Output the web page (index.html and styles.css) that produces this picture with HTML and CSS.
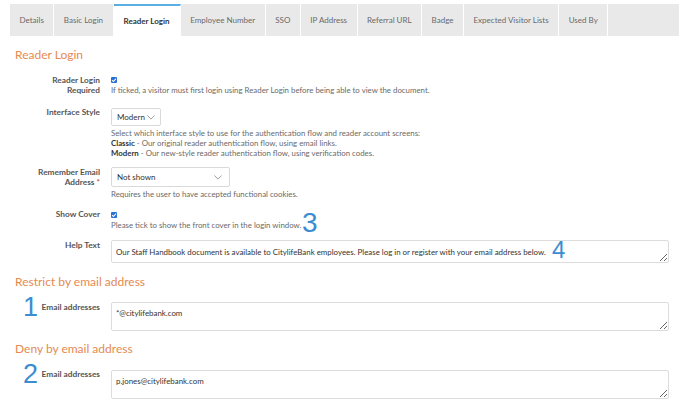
FILE: index.html
```html
<!DOCTYPE html>
<html>
<head>
<meta charset="utf-8">
<link rel="stylesheet" href="styles.css">
</head>
<body>
<div class="tabs">
  <div class="tab">Details</div>
  <div class="tab">Basic Login</div>
  <div class="tab active">Reader Login</div>
  <div class="tab">Employee Number</div>
  <div class="tab">SSO</div>
  <div class="tab">IP Address</div>
  <div class="tab">Referral URL</div>
  <div class="tab">Badge</div>
  <div class="tab">Expected Visitor Lists</div>
  <div class="tab">Used By</div>
  <div class="tab-fill"></div>
</div>

<h2 class="heading h-first">Reader Login</h2>

<div class="row r1">
  <div class="label">Reader Login<br>Required</div>
  <div class="field">
    <div class="check-line"><span class="check"><svg viewBox="0 0 8 8" width="6" height="6"><path d="M1.5 4.2 L3.3 6 L6.6 2.2" fill="none" stroke="#fff" stroke-width="1.4"/></svg></span></div>
    <div class="desc">If ticked, a visitor must first login using Reader Login before being able to view the document.</div>
  </div>
</div>

<div class="row r2">
  <div class="label">Interface Style</div>
  <div class="field">
    <div class="select sel-modern"><span>Modern</span><svg class="chev" viewBox="0 0 10 6" width="8" height="5"><path d="M0.5 0.5 L5 5 L9.5 0.5" fill="none" stroke="#777" stroke-width="0.9"/></svg></div>
    <div class="desc">Select which interface style to use for the authentication flow and reader account screens:<br><b>Classic</b> - Our original reader authentication flow, using email links.<br><b>Modern</b> - Our new-style reader authentication flow, using verification codes.</div>
  </div>
</div>

<div class="row r3">
  <div class="label">Remember Email<br>Address <span class="req">*</span></div>
  <div class="field">
    <div class="select sel-wide"><span>Not shown</span><svg class="chev" viewBox="0 0 10 6" width="8" height="5"><path d="M0.5 0.5 L5 5 L9.5 0.5" fill="none" stroke="#777" stroke-width="0.9"/></svg></div>
    <div class="desc">Requires the user to have accepted functional cookies.</div>
  </div>
</div>

<div class="row r4">
  <div class="label">Show Cover</div>
  <div class="field">
    <div class="check-line cl2"><span class="check"><svg viewBox="0 0 8 8" width="6" height="6"><path d="M1.5 4.2 L3.3 6 L6.6 2.2" fill="none" stroke="#fff" stroke-width="1.4"/></svg></span></div>
    <div class="desc">Please tick to show the front cover in the login window.</div>
  </div>
  <span class="num n3">3</span>
</div>

<div class="row r5">
  <div class="label">Help Text</div>
  <div class="field">
    <textarea class="ta ta-help">Our Staff Handbook document is available to CitylifeBank employees. Please log in or register with your email address below.</textarea>
  </div>
  <span class="num n4">4</span>
</div>

<h2 class="heading h2">Restrict by email address</h2>

<div class="row r6">
  <span class="num n1">1</span>
  <div class="label">Email addresses</div>
  <div class="field">
    <textarea class="ta ta-email">*@citylifebank.com</textarea>
  </div>
</div>

<h2 class="heading h3">Deny by email address</h2>

<div class="row r7">
  <span class="num n1">2</span>
  <div class="label">Email addresses</div>
  <div class="field">
    <textarea class="ta ta-email">p.jones@citylifebank.com</textarea>
  </div>
</div>
</body>
</html>
```

FILE: styles.css
```css
* { box-sizing: border-box; }
html, body { margin: 0; padding: 0; background: #fff; }
body {
  font-family: Lato, "Open Sans", "Liberation Sans", sans-serif;
  color: #444;
  width: 688px;
  height: 410px;
  overflow: hidden;
}

.tabs {
  display: flex;
  margin: 4px 9px 0 10px;
  height: 32px;
  background: #e9e9e9;
}
.tab {
  display: flex;
  align-items: center;
  padding: 0 9.5px;
  font-size: 8px;
  color: #6a6a6a;
  border-right: 1px solid #fff;
  white-space: nowrap;
}
.tab.active {
  background: #fff;
  color: #333;
  font-weight: 700;
  border-top: 2px solid #5aaee3;
  padding: 0 10px;
}
.tab-fill { flex: 1; }

.heading {
  font-weight: 400;
  color: #e58a52;
  font-size: 12px;
  line-height: 14px;
  margin: 0 0 0 15px;
}
.h-first { margin-top: 12px; }
.h2 { margin-top: 12px; }
.h3 { margin-top: 11px; }

.row {
  position: relative;
  display: grid;
  grid-template-columns: 100px 558px;
  column-gap: 11px;
}
.label {
  text-align: right;
  font-size: 8.3px;
  line-height: 10px;
  font-weight: 700;
  color: #555;
}
.req { color: #c0392b; font-weight: 400; }
.field { position: relative; }
.desc {
  font-size: 7.85px;
  line-height: 10px;
  color: #6a6a6a;
}
.desc b { color: #333; font-weight: 700; }

.r1 { margin-top: 13px; }
.r2 { margin-top: 12px; }
.r3 { margin-top: 9px; }
.r4 { margin-top: 10px; }
.r5 { margin-top: 10px; }
.r6 { margin-top: 13px; }
.r7 { margin-top: 13px; }

.check-line { height: 10px; display: flex; align-items: center; }
.cl2 { height: 11px; }
.check {
  width: 6px;
  height: 6px;
  border-radius: 1px;
  background: #2b6fd6;
  display: flex;
  align-items: center;
  justify-content: center;
}

.select {
  display: flex;
  align-items: center;
  justify-content: space-between;
  border: 1px solid #d9d9d9;
  border-radius: 2px;
  background: #fff;
  padding: 0 5px 0 5px;
  font-size: 8px;
  color: #333;
}
.sel-modern { width: 50px; height: 18px; margin-top: 1px; margin-bottom: 2px; }
.sel-wide { width: 119px; height: 20px; margin-bottom: 2px; padding-right: 7px; }
.chev { display: block; }

.ta {
  display: block;
  width: 558px;
  border: 1px solid #dcdcdc;
  border-radius: 2px;
  font-family: Lato, "Open Sans", "Liberation Sans", sans-serif;
  font-size: 7.9px;
  color: #333;
  padding: 6px 4px;
  margin: 0;
  line-height: 10px;
  resize: vertical;
  overflow: hidden;
  background: #fff;
}
.ta-help { height: 23px; }
.ta-email { height: 29px; padding-top: 5px; }
.r7 .ta-email { margin-top: 1px; }

.num {
  position: absolute;
  font-family: "Liberation Sans", Arial, sans-serif;
  color: #3b8dcf;
  line-height: 1;
}
.n3 {
  left: 302px;
  top: 0;
  font-size: 28px;
}
.n4 {
  left: 552px;
  top: -2px;
  font-size: 24px;
}
.n1 {
  left: 23px;
  top: -8px;
  font-size: 27px;
}
```
